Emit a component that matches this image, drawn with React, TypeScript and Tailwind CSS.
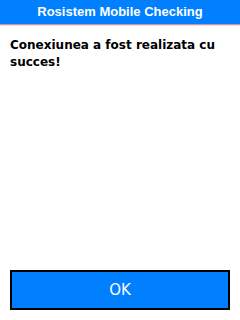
import React from 'react';

export default function App() {
  return (
    <div className="w-[240px] h-[320px] bg-white flex flex-col font-['DejaVu_Sans',sans-serif]">
      <div className="h-[24px] bg-[#0080ff] flex items-center justify-center text-white text-[13px] font-bold font-['Liberation_Sans',sans-serif]">
        Rosistem Mobile Checking
      </div>
      <div className="h-px bg-[#c890a8]" />
      <div className="h-px bg-[#f8dde4]" />
      <div className="flex-1 px-[10px] pt-[11px] text-[12px] font-bold leading-[17px] text-black">
        Conexiunea a fost realizata cu succes!
      </div>
      <div className="px-[10px] pb-[10px]">
        <button className="w-full h-[40px] bg-[#0080ff] border-2 border-black text-white text-[15px] flex items-center justify-center">
          OK
        </button>
      </div>
    </div>
  );
}
